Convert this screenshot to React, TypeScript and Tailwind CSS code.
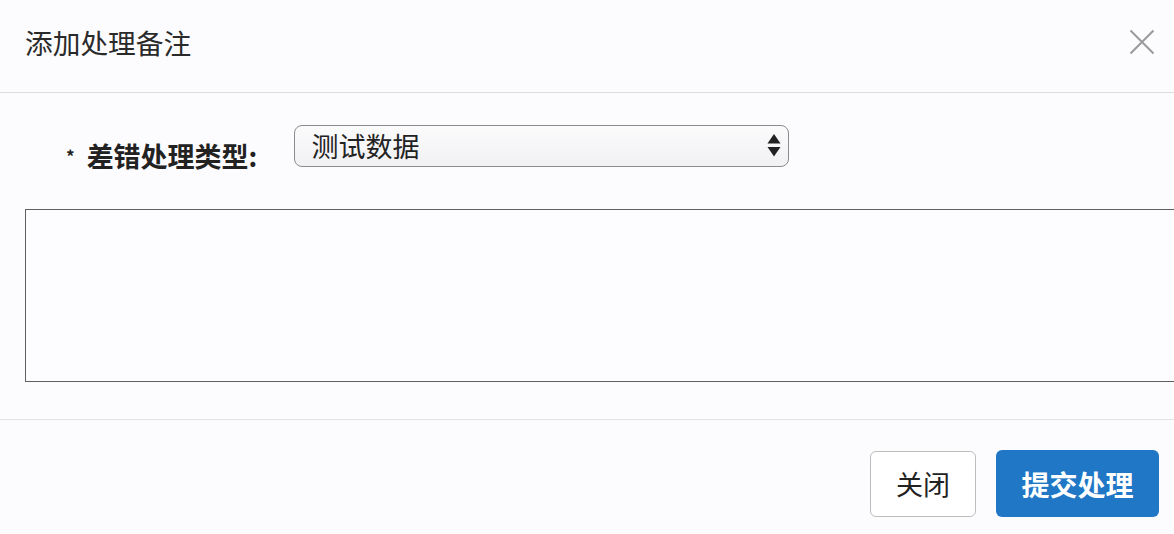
import { useState } from 'react';

const font = { fontFamily: '"Noto Sans CJK SC", "Noto Sans", sans-serif' };

export default function App() {
  const [type, setType] = useState('测试数据');
  const [note, setNote] = useState('');

  return (
    <div className="w-full h-[534px] overflow-hidden bg-[#fcfbfd] text-[#222]" style={font}>
      {/* Header */}
      <div className="h-[93px] border-b border-[#dedde0] flex items-start justify-between pt-[22px] pl-[25px] pr-[19px]">
        <h1 className="text-[27.7px] leading-[40px] font-normal text-[#2a2a2a]">添加处理备注</h1>
        <button className="mt-[7px] text-[#9a9a9a]" aria-label="close">
          <svg width="26" height="26" viewBox="0 0 26 26" fill="none" stroke="currentColor" strokeWidth="2">
            <path d="M1.5 1.5l23 23M24.5 1.5l-23 23" />
          </svg>
        </button>
      </div>

      {/* Body */}
      <div className="pt-[32px]">
        <div className="flex items-start h-[42px] pl-[66px]">
          <label className="mt-[10px] flex items-start font-bold text-[27px] leading-[42px] text-[#222]">
            <span className="text-[17px] leading-none mt-[12px] mr-[12px]">*</span>
            差错处理类型:
          </label>
          <div className="relative ml-[37px] w-[495px] h-[42px]">
            <select
              value={type}
              onChange={(e) => setType(e.target.value)}
              className="appearance-none w-full h-full rounded-[8px] border border-[#8c8c8c] bg-gradient-to-b from-[#fbfbfc] to-[#f1f0f3] pl-[16px] text-[27px] leading-[40px] text-[#222] outline-none"
              style={font}
            >
              <option>测试数据</option>
              <option>系统错误</option>
              <option>其他</option>
            </select>
            <svg className="absolute right-[8px] top-[9px] pointer-events-none" width="14" height="24" viewBox="0 0 14 24" fill="#222">
              <path d="M7 0L13.5 9.5H0.5Z" />
              <path d="M0.5 13H13.5L7 22.5Z" />
            </svg>
          </div>
        </div>

        <textarea
          value={note}
          onChange={(e) => setNote(e.target.value)}
          className="block mt-[42px] ml-[25px] w-[1170px] h-[173px] resize-none border-[1.5px] border-[#5f5f5f] bg-[#fdfcfe] outline-none p-2 text-[20px]"
          style={font}
        />
      </div>

      {/* Footer */}
      <div className="mt-[37px] border-t border-[#e2e1e4] pt-[30px] pr-[15px] flex justify-end gap-[20px]">
        <button className="w-[106px] h-[66px] mt-[1px] rounded-[6px] border border-[#bdbdbd] bg-white text-[27px] text-[#222]" style={font}>
          关闭
        </button>
        <button className="w-[163px] h-[67px] rounded-[6px] bg-[#1f77c6] text-white font-bold text-[28px]" style={font}>
          提交处理
        </button>
      </div>
    </div>
  );
}
